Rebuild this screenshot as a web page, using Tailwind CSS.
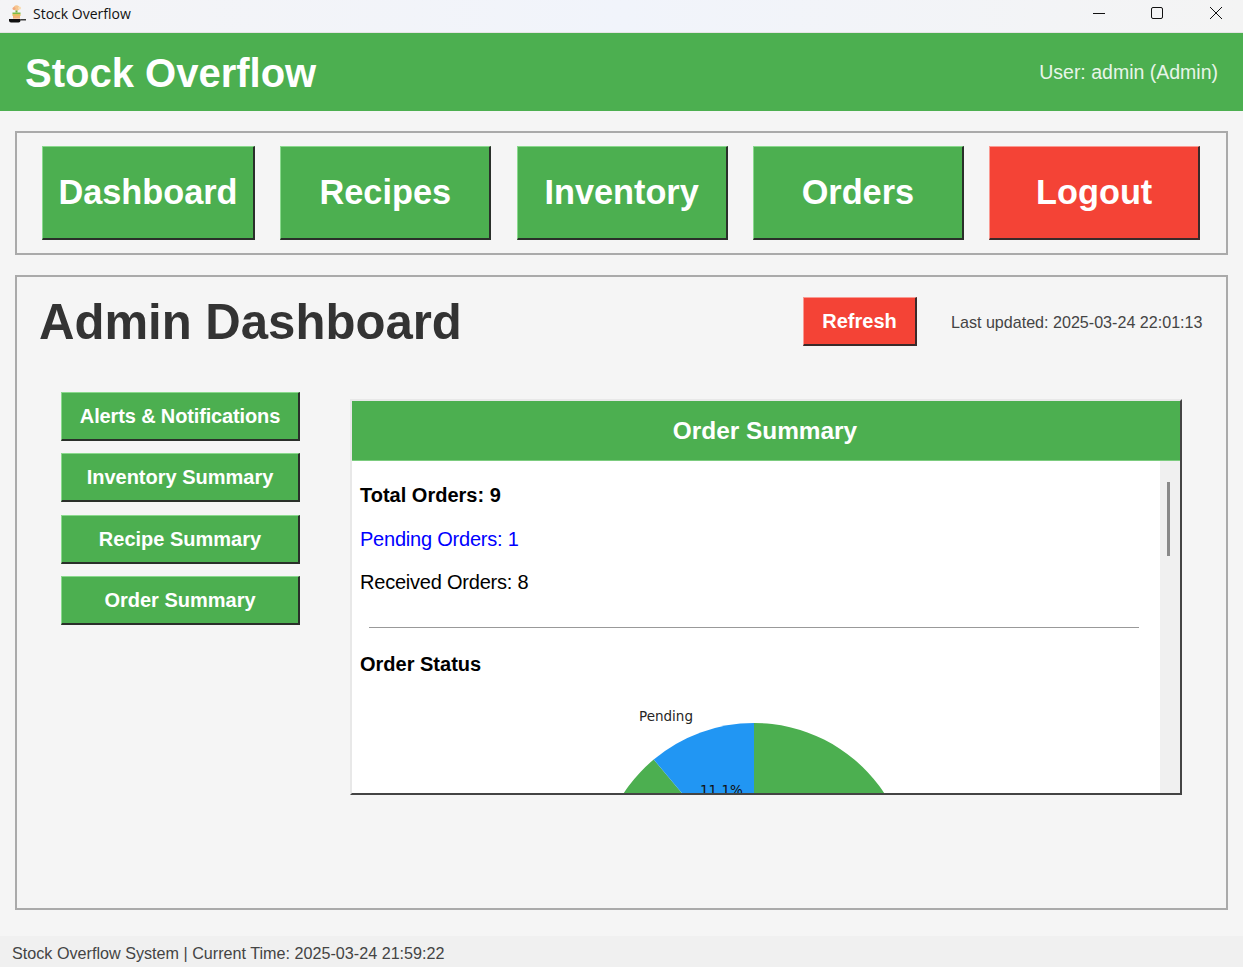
<!DOCTYPE html>
<html>

<head>
  <meta charset="UTF-8" />
  <title>Stock Overflow</title>
  <script src="https://cdn.jsdelivr.net/npm/@tailwindcss/browser@4"></script>
</head>

<body class="h-[967px] w-[1243px] overflow-hidden flex flex-col bg-[#f5f5f5] font-['Liberation_Sans',Arial,sans-serif]">
  <!-- window title bar -->
  <div class="h-[33px] flex items-center pb-[5px] bg-gradient-to-r from-[#f4f4f6] via-[#f1f4fb] to-[#f4f4f4] border-b border-[#e4e4e4]">
    <svg class="ml-[9px] w-[17px] h-[19px] mt-[3px]" viewBox="0 0 17 19">
      <circle cx="7.5" cy="3" r="2.8" fill="#f6c58f" />
      <circle cx="5" cy="3.5" r="1.5" fill="#f2a97c" />
      <circle cx="10.5" cy="3" r="1.5" fill="#f9dcae" />
      <rect x="6.5" y="5.5" width="2" height="2" fill="#6fae3f" />
      <rect x="3.5" y="7.5" width="8" height="1.6" fill="#7dbb45" />
      <rect x="3.5" y="9.2" width="8" height="1.6" fill="#e3b23c" />
      <rect x="4" y="11" width="7" height="2.6" fill="#f2b27a" />
      <path d="M0 14h11.5v1.4q0 2-2 2H2q-2 0-2-2z" fill="#111" />
      <rect x="11.5" y="14.2" width="5.5" height="1.2" fill="#111" />
    </svg>
    <span class="ml-[7px] text-[14px] text-[#111] font-['Open_Sans',sans-serif]">Stock Overflow</span>
    <div class="ml-auto flex items-center">
      <svg class="w-[12px] h-[12px] mr-[46px]" viewBox="0 0 12 12"><path d="M0 6.5h12" stroke="#111" stroke-width="1" /></svg>
      <svg class="w-[12px] h-[12px] mr-[46px]" viewBox="0 0 12 12"><rect x="0.5" y="0.5" width="11" height="11" rx="1.5" fill="none" stroke="#111" stroke-width="1" /></svg>
      <svg class="w-[14px] h-[14px] mr-[20px]" viewBox="0 0 14 14"><path d="M1 1l12 12M13 1L1 13" stroke="#111" stroke-width="1" /></svg>
    </div>
  </div>

  <!-- app header -->
  <div class="h-[78px] flex items-center justify-between bg-[#4caf50] pl-[25px] pr-[25px] pt-[2px]">
    <h1 class="text-[40px] font-bold text-white leading-none">Stock Overflow</h1>
    <span class="text-[19.5px] text-[#e8f5e9]">User: admin (Admin)</span>
  </div>

  <!-- nav -->
  <div class="mt-[20px] mx-[15px] h-[124px] border-2 border-[#aaaaaa] flex items-center pl-[25px] gap-[25.3px]">
    <button class="w-[213px] h-[94px] text-[34.3px] font-bold text-white bg-[#4caf50] border-t border-l border-t-[#8ad98d] border-l-[#8ad98d] border-r-2 border-b-2 border-r-[#2a2f2a] border-b-[#2a2f2a]">Dashboard</button>
    <button class="w-[211px] h-[94px] text-[34.3px] font-bold text-white bg-[#4caf50] border-t border-l border-t-[#8ad98d] border-l-[#8ad98d] border-r-2 border-b-2 border-r-[#2a2f2a] border-b-[#2a2f2a]">Recipes</button>
    <button class="w-[211px] h-[94px] text-[34.3px] font-bold text-white bg-[#4caf50] border-t border-l border-t-[#8ad98d] border-l-[#8ad98d] border-r-2 border-b-2 border-r-[#2a2f2a] border-b-[#2a2f2a]">Inventory</button>
    <button class="w-[211px] h-[94px] text-[34.3px] font-bold text-white bg-[#4caf50] border-t border-l border-t-[#8ad98d] border-l-[#8ad98d] border-r-2 border-b-2 border-r-[#2a2f2a] border-b-[#2a2f2a]">Orders</button>
    <button class="w-[211px] h-[94px] text-[34.3px] font-bold text-white bg-[#f44336] border-t border-l border-t-[#fa9a92] border-l-[#fa9a92] border-r-2 border-b-2 border-r-[#3a2a2a] border-b-[#3a2a2a]">Logout</button>
  </div>

  <!-- main panel -->
  <div class="mt-[20px] mx-[15px] h-[636px] border-2 border-[#aaaaaa] flex flex-col">
    <div class="flex items-center h-[90px] pl-[22px]">
      <h2 class="mt-[2px] w-[764px] text-[49.1px] font-bold text-[#333333] leading-none">Admin Dashboard</h2>
      <button class="w-[114px] h-[49px] text-[20px] font-bold text-white bg-[#f44336] border-t border-l border-t-[#fa9a92] border-l-[#fa9a92] border-r-2 border-b-2 border-r-[#3a2a2a] border-b-[#3a2a2a]">Refresh</button>
      <span class="mt-[1px] ml-[34px] text-[16.1px] text-[#444444] whitespace-nowrap">Last updated: 2025-03-24 22:01:13</span>
    </div>

    <div class="flex mt-[25px] pl-[44px]">
      <!-- side menu -->
      <div class="w-[239px] flex flex-col gap-[12.5px]">
        <button class="h-[49px] text-[20px] tracking-[-0.14px] font-bold text-white bg-[#4caf50] border-t border-l border-t-[#8ad98d] border-l-[#8ad98d] border-r-2 border-b-2 border-r-[#2a2f2a] border-b-[#2a2f2a]">Alerts &amp; Notifications</button>
        <button class="h-[49px] text-[20px] font-bold text-white bg-[#4caf50] border-t border-l border-t-[#8ad98d] border-l-[#8ad98d] border-r-2 border-b-2 border-r-[#2a2f2a] border-b-[#2a2f2a]">Inventory Summary</button>
        <button class="h-[49px] text-[20px] font-bold text-white bg-[#4caf50] border-t border-l border-t-[#8ad98d] border-l-[#8ad98d] border-r-2 border-b-2 border-r-[#2a2f2a] border-b-[#2a2f2a]">Recipe Summary</button>
        <button class="h-[49px] text-[20px] font-bold text-white bg-[#4caf50] border-t border-l border-t-[#8ad98d] border-l-[#8ad98d] border-r-2 border-b-2 border-r-[#2a2f2a] border-b-[#2a2f2a]">Order Summary</button>
      </div>

      <!-- order summary card -->
      <div class="ml-[50px] mt-[7px] w-[832px] h-[396px] flex flex-col overflow-hidden bg-white border-t-2 border-l-2 border-t-[#e8e8e8] border-l-[#e8e8e8] border-r-2 border-b-2 border-r-[#444444] border-b-[#444444]">
        <div class="h-[60px] shrink-0 flex items-center justify-center bg-[#4caf50] border-b border-[#7ccc7f] pt-[2px] pr-[2px] text-[24.4px] font-bold text-white">Order Summary</div>
        <div class="flex flex-1 min-h-0">
          <div class="w-[808px] overflow-hidden pl-[8px] pt-[20px]">
            <p class="text-[20px] leading-[28px] font-bold text-black">Total Orders: 9</p>
            <p class="mt-[16px] text-[20px] leading-[28px] tracking-[-0.22px] text-[#0000ff]">Pending Orders: 1</p>
            <p class="mt-[15px] text-[20px] leading-[28px] tracking-[-0.22px] text-black">Received Orders: 8</p>
            <div class="mt-[31px] ml-[9px] w-[770px] h-px bg-[#999999]"></div>
            <p class="mt-[22px] text-[20px] leading-[28px] font-bold text-black">Order Status</p>
            <svg class="mt-[29px] ml-[-8px]" width="808" height="260" viewBox="0 0 808 260">
              <path d="M402 172 L402 16 A156 156 0 1 1 301.7 52.5 Z" fill="#4caf50" />
              <path d="M402 172 L402 16 A156 156 0 0 0 301.7 52.5 Z" fill="#2196f3" />
              <text x="287" y="14" font-family="DejaVu Sans" font-size="13.5" fill="#262626">Pending</text>
              <text x="348" y="88" font-family="DejaVu Sans" font-size="13.5" fill="#111">11.1%</text>
            </svg>
          </div>
          <div class="w-[20px] bg-[#f0f0f0] pt-[21px] pl-[7px]">
            <div class="w-[3px] h-[74px] bg-[#8a8a8a]"></div>
          </div>
        </div>
      </div>
    </div>
  </div>

  <!-- status bar -->
  <div class="mt-[26px] h-[31px] flex items-center bg-[#f0f0f0] pl-[12px] pt-[4px] text-[16.16px] text-[#444444]">Stock Overflow System | Current Time: 2025-03-24 21:59:22</div>
</body>

</html>
